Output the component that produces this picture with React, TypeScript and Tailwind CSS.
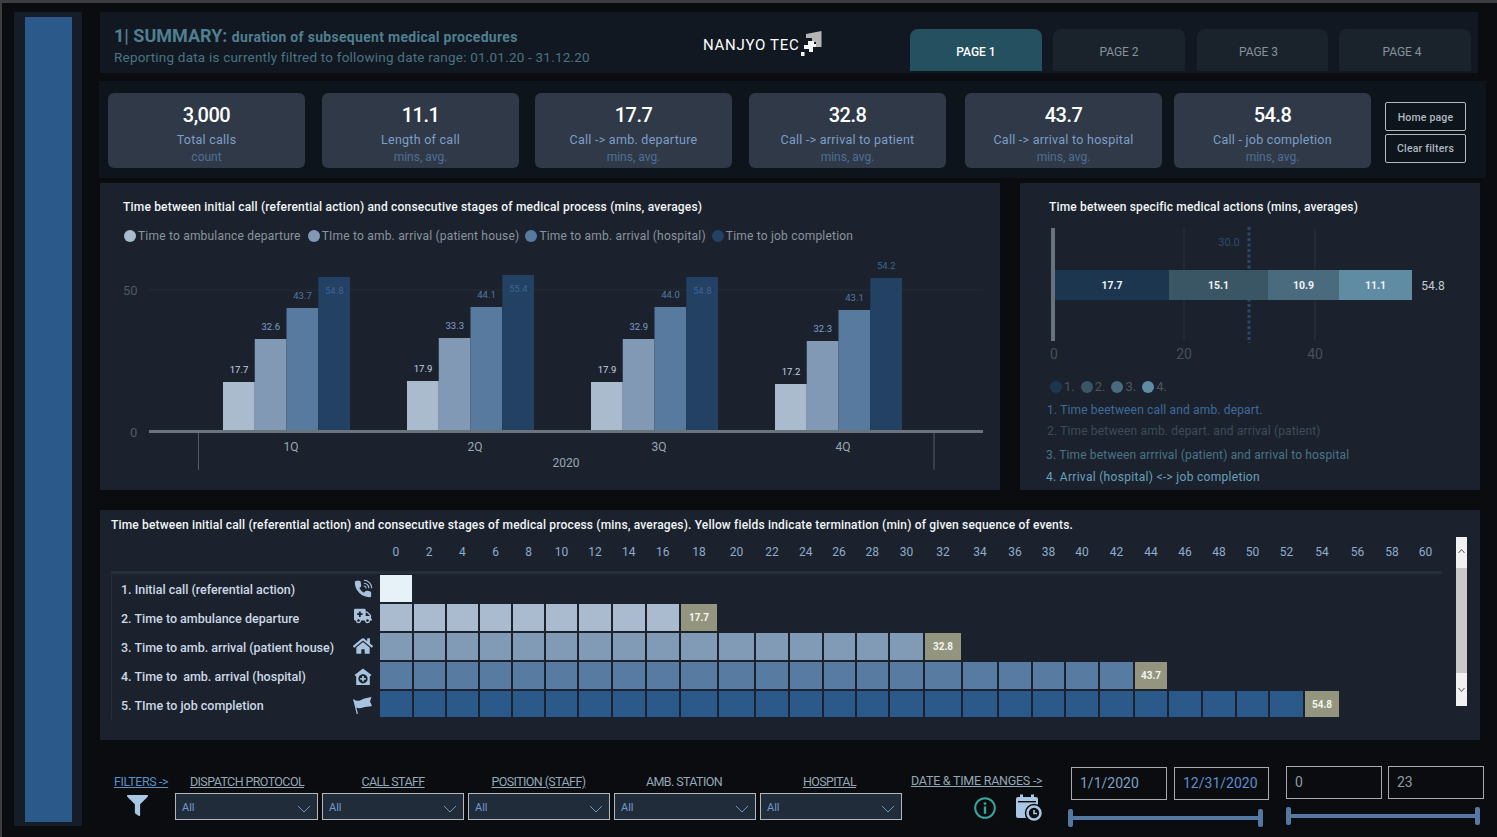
import React from "react";
import { FaAmbulance, FaHome, FaFilter } from "react-icons/fa";

const font = "font-['Roboto','Liberation_Sans',sans-serif]";
const GRID = "grid grid-cols-[33.5px_33px_33.5px_33px_33px_33px_34px_33.5px_34.5px_38px_37px_34px_33.5px_33px_33.5px_35px_38px_36px_34px_33px_34px_35px_34px_34px_34px_33px_35px_36px_35px_34px_33px]";

const kpis = [
  { v: "3,000", l: "Total calls", s: "count", c: "w-[197px]" },
  { v: "11.1", l: "Length of call", s: "mins, avg.", c: "w-[197px] ml-[17px]" },
  { v: "17.7", l: "Call -> amb. departure", s: "mins, avg.", c: "w-[197px] ml-[16px]" },
  { v: "32.8", l: "Call -> arrival to patient", s: "mins, avg.", c: "w-[197px] ml-[17px]" },
  { v: "43.7", l: "Call -> arrival to hospital", s: "mins, avg.", c: "w-[197px] ml-[19px]" },
  { v: "54.8", l: "Call - job completion", s: "mins, avg.", c: "w-[197px] ml-[12px]" },
];

const groups = [
  { x: 123, name: "1Q", v: ["17.7", "32.6", "43.7", "54.8"], t: [382, 339, 308, 277] },
  { x: 307, name: "2Q", v: ["17.9", "33.3", "44.1", "55.4"], t: [381, 338, 307, 275] },
  { x: 491, name: "3Q", v: ["17.9", "32.9", "44.0", "54.8"], t: [382, 339, 307, 277] },
  { x: 675, name: "4Q", v: ["17.2", "32.3", "43.1", "54.2"], t: [384, 341, 310, 278] },
];
const barColors = ["#abbbce", "#8199b5", "#587a9f", "#224163"];
const labelColors = ["#c3d2e3", "#7d9fca", "#5378a8", "#3d6594"];

function BarChart() {
  const oy = 250;
  return (
    <svg width="900" height="240" className="block">
      <line x1="49" x2="883" y1={290 - oy} y2={290 - oy} stroke="#252c37" strokeWidth="1" />
      <text x="23" y={295 - oy} fontSize="13" fill="#4f5964">50</text>
      <text x="30" y={437 - oy} fontSize="13" fill="#4f5964">0</text>
      {groups.map((g) => (
        <g key={g.name}>
          {g.t.map((t, i) => {
            const x = g.x + i * 31.75;
            const inside = t - 10 < 283 && i === 3 && g.name !== "4Q";
            return (
              <g key={i}>
                <rect x={x} y={t - oy} width={31.75} height={431 - t} fill={barColors[i]} />
                <text
                  x={x + 16}
                  y={(inside ? t + 17 : t - 9) - oy}
                  fontSize="9.5"
                  textAnchor="middle"
                  fill={labelColors[i]}
                >
                  {g.v[i]}
                </text>
              </g>
            );
          })}
          <text x={g.x + 68} y={451 - oy} fontSize="12" textAnchor="middle" fill="#9aa7b3">{g.name}</text>
        </g>
      ))}
      <rect x="49" y={430 - oy} width="834" height="3" fill="#6a747d" />
      <line x1="98.5" x2="98.5" y1={433 - oy} y2={470 - oy} stroke="#525c66" />
      <line x1="834" x2="834" y1={433 - oy} y2={470 - oy} stroke="#525c66" />
      <text x="466" y={467 - oy} fontSize="12" textAnchor="middle" fill="#9aa7b3">2020</text>
    </svg>
  );
}

function StackChart() {
  const ox = 1020;
  const oy = 222;
  const seg = [
    { x: 1055, w: 114, c: "#1d3650", v: "17.7" },
    { x: 1169, w: 99, c: "#3a5563", v: "15.1" },
    { x: 1268, w: 71, c: "#4a6a7e", v: "10.9" },
    { x: 1339, w: 73, c: "#5f8ba3", v: "11.1" },
  ];
  return (
    <svg width="460" height="146" className="block">
      <line x1={1184 - ox} x2={1184 - ox} y1={228 - oy} y2={341 - oy} stroke="#2b333e" />
      <line x1={1315 - ox} x2={1315 - ox} y1={228 - oy} y2={341 - oy} stroke="#2b333e" />
      <line x1={1249 - ox} x2={1249 - ox} y1={227 - oy} y2={343 - oy} stroke="#29486b" strokeWidth="3" strokeDasharray="3 2.5" />
      <text x={1229 - ox} y={246 - oy} fontSize="11" textAnchor="middle" fill="#2c4a70">30.0</text>
      <rect x={1051 - ox} y={228 - oy} width="4" height="113" fill="#68727c" />
      {seg.map((s) => (
        <g key={s.v}>
          <rect x={s.x - ox} y={270 - oy} width={s.w} height="30" fill={s.c} />
          <text x={s.x - ox + s.w / 2} y={289 - oy} fontSize="10.5" fontWeight="700" textAnchor="middle" fill="#eef2f5">{s.v}</text>
        </g>
      ))}
      <text x={1433 - ox} y={290 - oy} fontSize="12" textAnchor="middle" fill="#c5ccd3">54.8</text>
      <text x={1054 - ox} y={359 - oy} fontSize="14" textAnchor="middle" fill="#465059">0</text>
      <text x={1184 - ox} y={359 - oy} fontSize="14" textAnchor="middle" fill="#465059">20</text>
      <text x={1315 - ox} y={359 - oy} fontSize="14" textAnchor="middle" fill="#465059">40</text>
    </svg>
  );
}

function PhoneIcon() {
  return (
    <svg width="20" height="20" viewBox="0 0 24 24" className="-mt-[2px]">
      <path
        d="M6.62 10.79c1.44 2.83 3.76 5.14 6.59 6.59l2.2-2.2c.27-.27.67-.36 1.02-.24 1.12.37 2.33.57 3.57.57.55 0 1 .45 1 1V20c0 .55-.45 1-1 1C10.61 21 3 13.39 3 4c0-.55.45-1 1-1h3.5c.55 0 1 .45 1 1 0 1.25.2 2.45.57 3.57.11.35.03.74-.25 1.02l-2.2 2.2z"
        fill="#a9c3df"
        stroke="#a9c3df"
        strokeWidth="1.6"
        strokeLinejoin="round"
      />
      <path d="M13 1.5 A9.5 9.5 0 0 1 22.5 11 M13 5 A6 6 0 0 1 19 11 M13 8.3 A2.7 2.7 0 0 1 15.7 11" fill="none" stroke="#a9c3df" strokeWidth="1.3" />
    </svg>
  );
}

function HospitalIcon() {
  return (
    <svg width="18" height="18" viewBox="0 0 18 18">
      <path d="M9 0.5 L17.5 7 L15.8 8.4 L15.8 17 L2.2 17 L2.2 8.4 L0.5 7 Z" fill="#a9c3df" />
      <circle cx="9" cy="10.8" r="4.6" fill="#1b222d" />
      <path d="M9 8 V13.6 M6.2 10.8 H11.8" stroke="#a9c3df" strokeWidth="1.7" />
    </svg>
  );
}

function FlagIcon() {
  return (
    <svg width="20" height="19" viewBox="0 0 20 19">
      <path d="M0.5 3.5 C4 5.5 6.5 5 9 3.5 C12 1.8 15 2 18.5 1 L17 5.5 L19 10 C15.5 11 12.5 10.5 10 11.5 C7.5 12.5 5.5 12.6 3.2 11.6 Z" fill="#a9c3df" />
      <path d="M0.8 3.5 L4.4 18" stroke="#a9c3df" strokeWidth="1.2" />
    </svg>
  );
}

const rows = [
  { label: "1. Initial call (referential action)", n: 1, mark: -1, mv: "", c: "bg-[#e6f2f7]", h: "h-[29px]", icon: <PhoneIcon /> },
  { label: "2. Time to ambulance departure", n: 9, mark: 9, mv: "17.7", c: "bg-[#aabbcf]", h: "h-[29px]", icon: <FaAmbulance size={18} color="#a9c3df" className="-mt-[6px]" /> },
  { label: "3. Time to amb. arrival (patient house)", n: 16, mark: 16, mv: "32.8", c: "bg-[#819ab6]", h: "h-[29px]", icon: <FaHome size={20} color="#a9c3df" className="-mt-[4px]" /> },
  { label: "4. Time to  amb. arrival (hospital)", n: 22, mark: 22, mv: "43.7", c: "bg-[#587ba1]", h: "h-[29px]", icon: <HospitalIcon /> },
  { label: "5. TIme to job completion", n: 27, mark: 27, mv: "54.8", c: "bg-[#2b5a8a]", h: "h-[28px]", icon: <FlagIcon /> },
];

const ticks = Array.from({ length: 31 }, (_, i) => i * 2);

function Heatmap() {
  return (
    <section className="w-[1380px] h-[230px] bg-[#1b222d] pt-[8px] pl-[11px] relative">
      <h2 className="text-[12px] leading-[14px] font-medium text-[#f2f5f7] whitespace-nowrap tracking-[0.17px]">
        Time between initial call (referential action) and consecutive stages of medical process (mins, averages). Yellow fields indicate termination (min) of given sequence of events.
      </h2>
      <div className={`${GRID} ml-[268px] mt-[12px] h-[16px] text-[12px] leading-[16px] text-[#8fabcf] text-center`}>
        {ticks.map((t) => (
          <span key={t}>{t}</span>
        ))}
      </div>
      <div className="h-[3px] w-[1331px] bg-[#252e3b] mt-[11px]" />
      <div className="mt-[1px] w-[1331px]">
        {rows.map((r) => (
          <div key={r.label} className={`flex ${r.h}`}>
            <div className="w-[269px] shrink-0 flex items-center justify-between pl-[9px] pr-[7px] border-l border-[#252e3b]">
              <span className="text-[12.5px] font-medium text-[#cbd8e6] whitespace-pre mt-[2px]">{r.label}</span>
              <span className="w-[20px] flex justify-center">{r.icon}</span>
            </div>
            <div className={`${GRID} pb-[2px]`}>
              {Array.from({ length: r.n }, (_, i) => (
                <div key={i} className={`${r.c} mr-[2px]`} />
              ))}
              {r.mark >= 0 && (
                <div className="bg-[#93957f] mr-[2px] flex items-center justify-center text-[10px] font-bold text-[#f4f4ee]">{r.mv}</div>
              )}
            </div>
          </div>
        ))}
      </div>
      <div className="absolute left-[1356px] top-[27px] w-[11px] h-[169px] bg-[#f1f1f1] flex flex-col items-center justify-between">
        <svg width="9" height="9" viewBox="0 0 9 9" className="mt-[10px]"><path d="M1.5 6 L4.5 2.5 L7.5 6" fill="none" stroke="#555" strokeWidth="1" /></svg>
        <div className="absolute left-0 top-[31px] w-[11px] h-[105px] bg-[#c8c8c8]" />
        <svg width="9" height="9" viewBox="0 0 9 9" className="mb-[12px]"><path d="M1.5 3 L4.5 6.5 L7.5 3" fill="none" stroke="#555" strokeWidth="1" /></svg>
      </div>
    </section>
  );
}

function Select({ w, ml }: { w: string; ml: string }) {
  return (
    <div className={`${w} ${ml} h-[27px] border-[1.5px] border-[#b4b7ba] bg-[#212c3b] flex items-center justify-between pl-[6px] pr-[6px]`}>
      <span className="text-[11px] text-[#7198cb] mt-[3px]">All</span>
      <svg width="14" height="8" viewBox="0 0 14 8" className="mt-[4px]"><path d="M1 1 L7 7 L13 1" fill="none" stroke="#6f93bd" strokeWidth="1" /></svg>
    </div>
  );
}

function FilterCol({ label, underline = true }: { label: string; underline?: boolean }) {
  return (
    <div className={`flex-1 text-center text-[12.5px] leading-[14px] text-[#93a7b7] tracking-[-0.6px] ${underline ? "underline" : ""}`}>{label}</div>
  );
}

function Slider({ w }: { w: string }) {
  return (
    <div className={`${w} h-[18px] flex items-center justify-between relative`}>
      <div className="absolute left-0 right-0 top-[7px] h-[4px] bg-[#54789f]" />
      <div className="relative w-[5px] h-[18px] rounded-[2px] bg-[#54789f]" />
      <div className="relative w-[5px] h-[18px] rounded-[2px] bg-[#54789f]" />
    </div>
  );
}

function DateBox({ text, color, w }: { text: string; color: string; w: string }) {
  return (
    <div className={`${w} h-[33px] border-[1.5px] border-[#a9acaf] flex items-center pl-[8px] text-[14px] ${color}`}>{text}</div>
  );
}

function Logo() {
  return (
    <div className="flex items-start gap-[1px]">
      <span className="text-[15px] text-white tracking-[0.7px] leading-[18px] mt-[6px]">NANJYO TEC</span>
      <svg width="22" height="26" viewBox="0 0 22 26">
        <path d="M6 4 L21.5 1 V17 H16 V12 H12 V8 H6 Z" fill="#b5b5b5" />
        <path d="M8 11 H14 V14 H16 V17 H13 V22 H9 V19 H4 V15 H8 Z" fill="#f6f6f6" />
        <rect x="1" y="22" width="3.5" height="4" fill="#f6f6f6" />
      </svg>
    </div>
  );
}

export default function App() {
  return (
    <div className={`${font} w-[1497px] h-[837px] overflow-hidden bg-[#0b0c0f] border-t-[3px] border-l-[2px] border-[#3c3d3f] flex`}>
      <aside className="ml-[12px] mt-[9px] w-[68px] h-[814px] bg-[#141d28] pt-[5px] pl-[11px] shrink-0">
        <div className="w-[47px] h-[805px] bg-[#2b5a8a]" />
      </aside>
      <main className="ml-[18px] mt-[9px] w-[1380px] flex flex-col shrink-0">
        <header className="h-[61px] bg-[#111821] flex relative w-[1378px]">
          <div className="w-[603px] pl-[14px] pt-[13px]">
            <div className="leading-[22px] whitespace-nowrap text-[#4f7f90] font-bold">
              <span className="text-[18px]">1| SUMMARY: </span>
              <span className="text-[14px] tracking-[0.3px]">duration of subsequent medical procedures</span>
            </div>
            <div className="text-[13.5px] leading-[18px] text-[#4a7383] whitespace-nowrap tracking-[0.21px]">
              Reporting data is currently filtred to following date range: 01.01.20 - 31.12.20
            </div>
          </div>
          <div className="w-[207px] flex justify-start items-start pt-[18px]"><Logo /></div>
          <nav className="flex mt-[17px] h-[42px]">
            <div className="w-[132px] rounded-t-[8px] bg-[#24505f] flex items-center justify-center text-[12px] font-medium text-white pt-[4px]">PAGE 1</div>
            <div className="w-[132px] ml-[11px] rounded-t-[8px] bg-[#1a232b] flex items-center justify-center text-[12px] text-[#85929c] pt-[4px]">PAGE 2</div>
            <div className="w-[131px] ml-[12px] rounded-t-[8px] bg-[#1a232b] flex items-center justify-center text-[12px] text-[#85929c] pr-[8px] pt-[4px]">PAGE 3</div>
            <div className="w-[132px] ml-[11px] rounded-t-[8px] bg-[#1a232b] flex items-center justify-center text-[12px] text-[#85929c] pr-[6px] pt-[4px]">PAGE 4</div>
          </nav>
        </header>

        <section className="mt-[8px] h-[97px] w-[1387px] -ml-[1px] bg-[#0e141b] flex items-start pl-[9px] pt-[12px]">
          {kpis.map((k) => (
            <div key={k.v} className={`${k.c} h-[75px] rounded-[6px] bg-[#2f3947] flex flex-col items-center pt-[9px]`}>
              <div className="text-[20px] leading-[26px] font-medium text-white tracking-[-0.5px]">{k.v}</div>
              <div className="text-[12.5px] leading-[16px] mt-[4px] text-[#7d9fc7] tracking-[0.26px]">{k.l}</div>
              <div className="text-[12px] leading-[16px] mt-[1px] text-[#4f6f96]">{k.s}</div>
            </div>
          ))}
          <div className="ml-[14px] mt-[9px] flex flex-col gap-[3px]">
            <div className="w-[81px] h-[29px] rounded-[2px] border border-[#b4b7ba] flex items-center justify-center text-[10.5px] font-medium tracking-[0.2px] text-[#aeb8c2] pt-[2px]">Home page</div>
            <div className="w-[81px] h-[29px] rounded-[2px] border border-[#b4b7ba] flex items-center justify-center text-[10.5px] font-medium tracking-[0.2px] text-[#aeb8c2]">Clear filters</div>
          </div>
        </section>

        <div className="mt-[5px] h-[307px] flex gap-[20px]">
          <section className="w-[900px] h-[307px] bg-[#1b222d]">
            <h2 className="pl-[23px] pt-[17px] text-[12px] leading-[14px] font-medium text-[#f2f5f7] whitespace-nowrap tracking-[0.19px]">
              Time between initial call (referential action) and consecutive stages of medical process (mins, averages)
            </h2>
            <div className="pl-[24px] mt-[14px] h-[16px] flex items-center text-[12px] leading-[16px] text-[#8a949e] whitespace-nowrap tracking-[0.2px]">
              <span className="w-[12px] h-[12px] rounded-full bg-[#abbbce] mr-[2px]" /><span>Time to ambulance departure</span>
              <span className="w-[12px] h-[12px] rounded-full bg-[#8199b5] ml-[7px] mr-[2px]" /><span>TIme to amb. arrival (patient house)</span>
              <span className="w-[12px] h-[12px] rounded-full bg-[#587a9f] ml-[6px] mr-[2px]" /><span>Time to amb. arrival (hospital)</span>
              <span className="w-[12px] h-[12px] rounded-full bg-[#224163] ml-[6px] mr-[2px]" /><span>Time to job completion</span>
            </div>
            <div className="mt-[6px]"><BarChart /></div>
          </section>
          <section className="w-[460px] h-[307px] bg-[#1b222d]">
            <h2 className="pl-[29px] pt-[17px] text-[12px] leading-[14px] font-medium text-[#f2f5f7] whitespace-nowrap tracking-[0.15px]">
              Time between specific medical actions (mins, averages)
            </h2>
            <div className="mt-[8px]"><StackChart /></div>
            <div className="pl-[30px] mt-[11px] flex items-center h-[16px] text-[13px] text-[#4c5660]">
              <span className="w-[12px] h-[12px] rounded-full bg-[#1d3650]" /><span className="ml-[2px]">1.</span>
              <span className="w-[12px] h-[12px] rounded-full bg-[#3a5563] ml-[6px]" /><span className="ml-[2px]">2.</span>
              <span className="w-[12px] h-[12px] rounded-full bg-[#4a6a7e] ml-[6px]" /><span className="ml-[2px]">3.</span>
              <span className="w-[12px] h-[12px] rounded-full bg-[#5f8ba3] ml-[6px]" /><span className="ml-[2px]">4.</span>
            </div>
            <div className="pl-[27px] mt-[7px] text-[12px] leading-[16px] whitespace-nowrap tracking-[0.16px] text-[#3f6a9c]">1. Time beetween call and amb. depart.</div>
            <div className="pl-[27px] mt-[5px] text-[12px] leading-[16px] whitespace-nowrap tracking-[0.16px] text-[#3c4c5a]">2. Time between amb. depart. and arrival (patient)</div>
            <div className="pl-[26px] mt-[8px] text-[12px] leading-[16px] whitespace-nowrap tracking-[0.16px] text-[#4a7388]">3. Time between arrrival (patient) and arrival to hospital</div>
            <div className="pl-[26px] mt-[6px] text-[12px] leading-[16px] whitespace-nowrap tracking-[0.3px] text-[#69a0bb]">4. Arrival (hospital) {"<->"} job completion</div>
          </section>
        </div>

        <div className="mt-[20px]"><Heatmap /></div>

        <section className="mt-[26px] flex items-start w-[1386px]">
          <div className="w-[75px] pl-[14px] pt-[9px] shrink-0">
            <div className="text-[12.5px] leading-[14px] text-[#5a8fc8] underline whitespace-nowrap tracking-[-0.4px]">FILTERS -&gt;</div>
            <FaFilter size={21} color="#a9c6e4" className="ml-[13px] mt-[6px]" />
          </div>
          <div className="w-[728px] shrink-0 pt-[9px]">
            <div className="flex -ml-[1px]">
              <div className="w-[146px]"><FilterCol label="DISPATCH PROTOCOL" /></div>
              <div className="w-[146px]"><FilterCol label="CALL STAFF" /></div>
              <div className="w-[145px]"><FilterCol label="POSITION (STAFF)" /></div>
              <div className="w-[146px]"><FilterCol label="AMB. STATION" underline={false} /></div>
              <div className="w-[145px]"><FilterCol label="HOSPITAL" /></div>
            </div>
            <div className="flex mt-[4px]">
              <Select w="w-[143px]" ml="ml-0" />
              <Select w="w-[142px]" ml="ml-[4px]" />
              <Select w="w-[142px]" ml="ml-[4px]" />
              <Select w="w-[142px]" ml="ml-[4px]" />
              <Select w="w-[142px]" ml="ml-[4px]" />
            </div>
          </div>
          <div className="w-[168px] shrink-0 pl-[8px] pt-[8px]">
            <div className="text-[12.5px] leading-[14px] text-[#93a7b7] underline whitespace-nowrap tracking-[-0.25px]">DATE &amp; TIME RANGES -&gt;</div>
            <div className="flex items-center mt-[6px] pl-[62px]">
              <svg width="24" height="24" viewBox="0 0 24 24"><circle cx="12" cy="12" r="9.8" fill="none" stroke="#3aa39c" strokeWidth="2" /><circle cx="12" cy="7.6" r="1.4" fill="#3aa39c" /><rect x="10.8" y="10.4" width="2.4" height="7.4" fill="#3aa39c" /></svg>
              <svg width="28" height="28" viewBox="0 0 28 28" className="ml-[18px]">
                <rect x="1" y="3" width="22" height="21" rx="2" fill="#a9c6e4" />
                <rect x="5" y="0.5" width="3" height="5" fill="#a9c6e4" /><rect x="16" y="0.5" width="3" height="5" fill="#a9c6e4" />
                <rect x="3" y="7" width="18" height="1.4" fill="#0b0c0f" />
                <circle cx="19" cy="19" r="8.5" fill="#a9c6e4" stroke="#0b0c0f" strokeWidth="1.5" />
                <circle cx="19" cy="19" r="5.2" fill="#0b0c0f" />
                <path d="M19 16 V19.5 H22" stroke="#a9c6e4" strokeWidth="1.6" fill="none" />
              </svg>
            </div>
          </div>
          <div className="shrink-0 mt-[1px]">
            <div className="flex gap-[7px]">
              <DateBox text="1/1/2020" color="text-[#7fa0c8]" w="w-[96px]" />
              <DateBox text="12/31/2020" color="text-[#5a8fd0]" w="w-[95px]" />
            </div>
            <div className="mt-[9px] -ml-[3px]"><Slider w="w-[195px]" /></div>
          </div>
          <div className="shrink-0 ml-[17px]">
            <div className="flex gap-[6px]">
              <DateBox text="0" color="text-[#8b9aa8]" w="w-[96px]" />
              <DateBox text="23" color="text-[#8b9aa8]" w="w-[96px]" />
            </div>
            <div className="mt-[8px]"><Slider w="w-[194px]" /></div>
          </div>
        </section>
      </main>
    </div>
  );
}
